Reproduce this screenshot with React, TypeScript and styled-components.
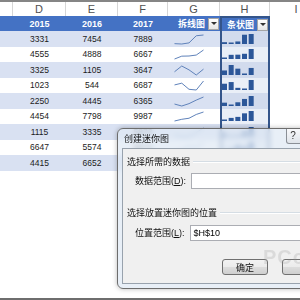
import styled, { createGlobalStyle } from "styled-components";

const COLS = "13px 53px 52px 50px 52px 50px 52px";
const LATIN = `"Liberation Sans", "Noto Sans CJK SC", sans-serif`;

const GlobalStyle = createGlobalStyle`
  html, body {
    margin: 0;
    padding: 0;
    background: #fff;
  }
`;

type RowData = { d: string; e: string; f: string; s: number[] };

const rows: RowData[] = [
  { d: "3331", e: "7454", f: "7889", s: [2900, 2700, 3331, 7454, 7889] },
  { d: "4555", e: "4888", f: "6667", s: [3500, 4500, 4555, 4888, 6667] },
  { d: "3325", e: "1105", f: "3647", s: [2500, 5000, 3325, 1105, 3647] },
  { d: "1023", e: "544", f: "6687", s: [4000, 5200, 1023, 544, 6687] },
  { d: "2250", e: "4445", f: "6365", s: [2000, 800, 2250, 4445, 6365] },
  { d: "4454", e: "7798", f: "9987", s: [2000, 3500, 4454, 7798, 9987] },
  { d: "1115", e: "3335", f: "5873", s: [2000, 900, 1115, 3335, 5873] },
  { d: "6647", e: "5574", f: "8874", s: [3000, 4200, 6647, 5574, 8874] },
  { d: "4415", e: "6652", f: "7751", s: [5000, 3000, 4415, 6652, 7751] },
];

const norm = (s: number[]) => {
  const min = Math.min(...s);
  const max = Math.max(...s);
  return s.map((v) => (v - min) / (max - min || 1));
};

const Screen = styled.div`
  position: relative;
  width: 300px;
  height: 300px;
  overflow: hidden;
  display: flex;
  flex-direction: column;
  background: #fff;
`;

const TopEdge = styled.div`
  height: 2px;
  background: #858585;
`;

const LetterBar = styled.div`
  display: grid;
  grid-template-columns: ${COLS};
  height: 14px;
`;

const Letter = styled.div`
  display: flex;
  align-items: center;
  justify-content: center;
  border-right: 1px solid #d6d6d6;
  font: 11px ${LATIN};
  color: #505050;
  &:last-child {
    border-right: none;
  }
`;

const Row = styled.div<{ $h: number }>`
  display: grid;
  grid-template-columns: ${COLS};
  height: ${(p) => p.$h}px;
`;

const HeadCell = styled.div<{ $sel?: boolean; $drop?: boolean }>`
  box-sizing: border-box;
  display: flex;
  align-items: center;
  justify-content: ${(p) => (p.$drop ? "flex-end" : "center")};
  gap: 2px;
  padding-right: ${(p) => (p.$drop ? "1px" : "0")};
  background: #4472c4;
  color: #fff;
  font: bold 9px ${LATIN};
  ${(p) =>
    p.$sel &&
    `border: 2px solid #34558a; border-bottom: none; padding-right: 0;`}
`;

const DropButton = styled.div`
  width: 11px;
  height: 12px;
  box-sizing: border-box;
  border: 1px solid #a5a5a5;
  background: linear-gradient(#ffffff, #e6e6e6);
  display: flex;
  align-items: center;
  justify-content: center;
  &::after {
    content: "";
    border-left: 3px solid transparent;
    border-right: 3px solid transparent;
    border-top: 3px solid #333;
  }
`;

const HeadLabel = styled.span`
  margin-right: 1px;
`;

const Cell = styled.div<{ $band: boolean }>`
  display: flex;
  align-items: center;
  justify-content: center;
  background: ${(p) => (p.$band ? "#d9e1f2" : "#fff")};
  font: 8.5px ${LATIN};
  color: #1c1c1c;
`;

const SparkCell = styled(Cell)`
  justify-content: flex-start;
  padding-left: 6px;
`;

const BarCell = styled.div<{ $band: boolean }>`
  box-sizing: border-box;
  display: flex;
  align-items: flex-end;
  padding: 0 0 3px 0;
  border-left: 2px solid #34558a;
  border-right: 2px solid #34558a;
  background: ${(p) => (p.$band ? "#d2dbed" : "#eaeff7")};
`;

const Blank = styled.div``;

const Filler = styled.div`
  flex: 1;
`;

const BottomEdge = styled.div`
  height: 2px;
  background: #6e6e6e;
`;

/* dialog */

const Dialog = styled.div`
  position: absolute;
  left: 117px;
  top: 128px;
  width: 200px;
  height: 161px;
  box-sizing: border-box;
  border: 1px solid #6d6d6d;
  border-radius: 6px;
  padding: 0 4px 4px 4px;
  display: flex;
  flex-direction: column;
  background: rgba(224, 233, 244, 0.74);
  backdrop-filter: blur(2.5px);
  box-shadow: 0 0 5px rgba(0, 0, 0, 0.28);
`;

const TitleBar = styled.div`
  height: 19px;
  display: flex;
  justify-content: space-between;
  align-items: flex-start;
`;

const Title = styled.span`
  margin: 5px 0 0 2px;
  font: 9px/10px ${LATIN};
  color: #111;
`;

const HelpButton = styled.div`
  width: 26px;
  height: 15px;
  box-sizing: border-box;
  border: 1px solid #8a8f96;
  border-top: none;
  border-radius: 0 0 3px 3px;
  background: linear-gradient(#f8f9fb, #dfe4ea);
  display: flex;
  justify-content: center;
  align-items: center;
  font: 10px/1 ${LATIN};
  color: #333;
  padding-right: 12px;
`;

const Client = styled.div`
  flex: 1;
  box-sizing: border-box;
  border: 1px solid #98a2ad;
  background: #f0f0f0;
  padding: 7px 0 0 4px;
  display: flex;
  flex-direction: column;
  font: 9px/12px ${LATIN};
  color: #111;
`;

const GroupHeader = styled.div<{ $gap: number }>`
  margin-top: ${(p) => p.$gap}px;
  height: 12px;
  display: flex;
  align-items: center;
  gap: 3px;
  &::after {
    content: "";
    flex: 1;
    border-top: 1px solid #d5dde4;
    border-bottom: 1px solid #fff;
  }
`;

const FieldRow = styled.div<{ $gap: number }>`
  margin-top: ${(p) => p.$gap}px;
  padding-left: 8px;
  display: flex;
  align-items: center;
  height: 16px;
`;

const FieldLabel = styled.span`
  white-space: nowrap;
`;

const Input = styled.div`
  flex: 1;
  height: 16px;
  box-sizing: border-box;
  margin-left: 5px;
  border: 1px solid #abadb3;
  background: #fff;
  padding-left: 3px;
  display: flex;
  align-items: center;
  font: 9px ${LATIN};
  color: #000;
`;

const ButtonRow = styled.div`
  margin-top: 18px;
  padding-left: 95px;
  display: flex;
  gap: 14px;
`;

const Button = styled.div`
  flex: none;
  width: 46px;
  height: 16px;
  box-sizing: border-box;
  border: 1px solid #707070;
  border-radius: 3px;
  background: linear-gradient(#f2f2f2 0%, #ebebeb 50%, #dddddd 51%, #cfcfcf 100%);
  display: flex;
  align-items: center;
  justify-content: center;
  font: 9px ${LATIN};
  color: #111;
`;

const Watermark = styled.div`
  position: absolute;
  left: 263px;
  top: 247px;
  font: bold 20px ${LATIN};
  color: rgba(150, 150, 150, 0.24);
  letter-spacing: 1px;
  line-height: 1;
  pointer-events: none;
`;

const LineSpark = ({ values }: { values: number[] }) => {
  const n = norm(values);
  const w = 29;
  const h = 9;
  const pts = n
    .map((v, i) => `${(i * w) / (n.length - 1) + 0.5},${h - v * h + 1}`)
    .join(" ");
  return (
    <svg width={30} height={11} style={{ marginTop: 1 }}>
      <polyline points={pts} fill="none" stroke="#5f82ba" strokeWidth={1} />
    </svg>
  );
};

const BarSpark = ({ values }: { values: number[] }) => {
  const n = norm(values);
  return (
    <svg width={34} height={10}>
      {n.map((v, i) => {
        const bh = 1.5 + v * 8.5;
        return (
          <rect
            key={i}
            x={i * 6.67}
            y={10 - bh}
            width={5}
            height={bh}
            fill="#2c5799"
          />
        );
      })}
    </svg>
  );
};

const App: React.FC = () => {
  return (
    <Screen>
      <GlobalStyle />
      <TopEdge />
      <LetterBar>
        {["", "D", "E", "F", "G", "H", "I"].map((l, i) => (
          <Letter key={i}>{l}</Letter>
        ))}
      </LetterBar>
      <Row $h={15}>
        <HeadCell />
        <HeadCell>2015</HeadCell>
        <HeadCell>2016</HeadCell>
        <HeadCell>2017</HeadCell>
        <HeadCell $drop>
          <HeadLabel>拆线图</HeadLabel>
          <DropButton />
        </HeadCell>
        <HeadCell $drop $sel>
          <HeadLabel>条状图</HeadLabel>
          <DropButton />
        </HeadCell>
        <Blank />
      </Row>
      {rows.map((r, i) => {
        const band = i % 2 === 0;
        return (
          <Row $h={15.5} key={i}>
            <Cell $band={band} />
            <Cell $band={band}>{r.d}</Cell>
            <Cell $band={band}>{r.e}</Cell>
            <Cell $band={band}>{r.f}</Cell>
            <SparkCell $band={band}>
              <LineSpark values={r.s} />
            </SparkCell>
            <BarCell $band={band}>
              <BarSpark values={r.s} />
            </BarCell>
            <Blank />
          </Row>
        );
      })}
      <Filler />
      <BottomEdge />

      <Dialog>
        <TitleBar>
          <Title>创建迷你图</Title>
          <HelpButton>?</HelpButton>
        </TitleBar>
        <Client>
          <GroupHeader $gap={0}>选择所需的数据</GroupHeader>
          <FieldRow $gap={5}>
            <FieldLabel>
              数据范围(<u>D</u>):
            </FieldLabel>
            <Input />
          </FieldRow>
          <GroupHeader $gap={18}>选择放置迷你图的位置</GroupHeader>
          <FieldRow $gap={6}>
            <FieldLabel>
              位置范围(<u>L</u>):
            </FieldLabel>
            <Input>$H$10</Input>
          </FieldRow>
          <ButtonRow>
            <Button>确定</Button>
            <Button />
          </ButtonRow>
        </Client>
      </Dialog>
      <Watermark>PCo</Watermark>
    </Screen>
  );
};

export default App;
